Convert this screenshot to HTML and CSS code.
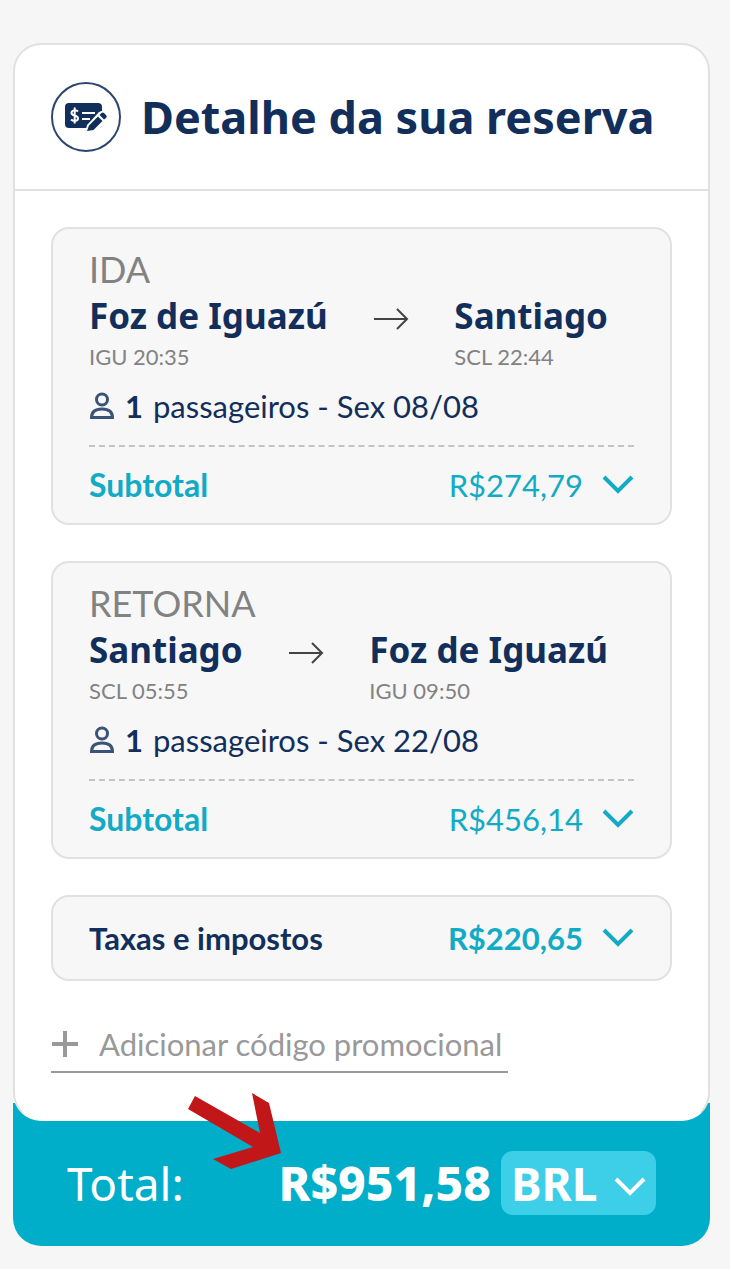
FILE: index.html
```html
<!DOCTYPE html>
<html lang="pt-BR">
<head>
  <meta charset="UTF-8">
  <meta name="viewport" content="width=device-width, initial-scale=1">
  <title>Detalhe da sua reserva</title>
  <link rel="stylesheet" href="styles.css">
</head>
<body>
  <main class="booking">
    <div class="card">
      <header class="card-header">
        <span class="header-icon">
          <svg width="44" height="34" viewBox="0 0 44 34" aria-hidden="true">
            <rect x="1" y="3" width="37" height="25" rx="4" fill="#122f5c"/>
            <path d="M14 11.5C12 9.5 7.500 10 7.500 13C7.500 16.500 14 14.500 14 18.500C14 21.500 9 21.500 7 19.500M10.700 7.500V23.500" fill="none" stroke="#fff" stroke-width="2"/>
            <path d="M18 13H31M18 19H26" stroke="#fff" stroke-width="2"/>
            <path d="M21 33L23 25L35 12L40 10L46 16L32 33Z" fill="#fff"/>
            <path d="M23 31L25 25.500L34 16.500L38.500 21L29.500 30Z" fill="#122f5c"/>
            <path d="M35.500 15L37.500 13Q39 12 40.500 13.500L42 15Q43.500 16.500 42 18L40 19.500Z" fill="#122f5c"/>
          </svg>
        </span>
        <h1>Detalhe da sua reserva</h1>
      </header>

      <div class="card-body">
        <section class="box flight">
          <p class="direction">IDA</p>
          <div class="route">
            <div class="stop">
              <h2>Foz de Iguazú</h2>
              <p>IGU 20:35</p>
            </div>
            <svg class="route-arrow" width="36" height="24" viewBox="0 0 36 24" aria-hidden="true"><path d="M1 12H34M24 2L34 12L24 22"/></svg>
            <div class="stop">
              <h2>Santiago</h2>
              <p>SCL 22:44</p>
            </div>
          </div>
          <p class="passengers">
            <svg width="26" height="28" viewBox="0 0 26 28" aria-hidden="true"><circle cx="13" cy="7.500" r="5.500"/><path d="M2.500 25.500C2.500 20 6 17 13 17S23.500 20 23.500 25.500Z"/></svg>
            <b>1</b>
            <span>passageiros - Sex 08/08</span>
          </p>
          <button type="button" class="price-row subtotal">
            <span class="label">Subtotal</span>
            <span class="amount">R$274,79</span>
            <svg class="chevron" width="32" height="20" viewBox="0 0 32 20" aria-hidden="true"><path d="M2 2L16 16L30 2"/></svg>
          </button>
        </section>

        <section class="box flight">
          <p class="direction">RETORNA</p>
          <div class="route">
            <div class="stop">
              <h2>Santiago</h2>
              <p>SCL 05:55</p>
            </div>
            <svg class="route-arrow" width="36" height="24" viewBox="0 0 36 24" aria-hidden="true"><path d="M1 12H34M24 2L34 12L24 22"/></svg>
            <div class="stop">
              <h2>Foz de Iguazú</h2>
              <p>IGU 09:50</p>
            </div>
          </div>
          <p class="passengers">
            <svg width="26" height="28" viewBox="0 0 26 28" aria-hidden="true"><circle cx="13" cy="7.500" r="5.500"/><path d="M2.500 25.500C2.500 20 6 17 13 17S23.500 20 23.500 25.500Z"/></svg>
            <b>1</b>
            <span>passageiros - Sex 22/08</span>
          </p>
          <button type="button" class="price-row subtotal">
            <span class="label">Subtotal</span>
            <span class="amount">R$456,14</span>
            <svg class="chevron" width="32" height="20" viewBox="0 0 32 20" aria-hidden="true"><path d="M2 2L16 16L30 2"/></svg>
          </button>
        </section>

        <section class="box">
          <button type="button" class="price-row taxes">
            <span class="label">Taxas e impostos</span>
            <span class="amount">R$220,65</span>
            <svg class="chevron" width="32" height="20" viewBox="0 0 32 20" aria-hidden="true"><path d="M2 2L16 16L30 2"/></svg>
          </button>
        </section>

        <button type="button" class="promo">
          <svg width="28" height="28" viewBox="0 0 28 28" aria-hidden="true"><path d="M14 1V27M1 14H27"/></svg>
          <span>Adicionar código promocional</span>
        </button>
      </div>
    </div>

    <footer class="total">
      <span class="total-label">Total:</span>
      <strong class="total-amount">R$951,58</strong>
      <div class="currency">
        <select aria-label="Moeda">
          <option>BRL</option>
          <option>USD</option>
        </select>
        <svg width="32" height="20" viewBox="0 0 32 20" aria-hidden="true"><path d="M2 2L16 16L30 2"/></svg>
      </div>
      <svg class="pointer" width="94" height="78" viewBox="0 0 94 78" aria-hidden="true"><path d="M8 4L73 41L65 1L82 11L94 61L44 77L26 67L66 55L1 17Z" fill="#c11718"/></svg>
    </footer>
  </main>
</body>
</html>
```
FILE: styles.css
```css
* {
  box-sizing: border-box;
}
body {
  margin: 0;
  padding: 43px 20px 22px 13px;
  background: #f6f6f6;
  color: #122f5c;
  font-family: Lato, sans-serif;
  font-size: 31px;
  line-height: 40px;
}
h1, h2, p {
  margin: 0;
}
button, select {
  border: 0;
  padding: 0;
  background: none;
  color: inherit;
  font: inherit;
  text-align: left;
  cursor: pointer;
}
svg {
  display: block;
  flex: none;
}

.card {
  position: relative;
  z-index: 1;
  background: #fff;
  border: 2px solid #e1e1e1;
  border-bottom-color: #fff;
  border-radius: 28px;
}
.card-header {
  display: flex;
  align-items: center;
  gap: 20px;
  height: 146px;
  padding: 0 36px;
  border-bottom: 2px solid #e1e1e1;
}
.header-icon {
  display: flex;
  flex: none;
  align-items: center;
  justify-content: center;
  width: 70px;
  height: 70px;
  border: 2px solid #2c466e;
  border-radius: 50%;
}
h1 {
  font-family: "Noto Sans", sans-serif;
  font-size: 45px;
  line-height: 60px;
  font-weight: 700;
  white-space: nowrap;
}

.card-body {
  display: flex;
  flex-direction: column;
  gap: 36px;
  padding: 36px 36px 46px;
}
.box {
  background: #f7f7f7;
  border: 2px solid #e1e1e1;
  border-radius: 18px;
  padding: 0 36px;
}
.flight {
  padding-top: 18px;
}
.direction {
  color: #828282;
  font-size: 36px;
  line-height: 44px;
}
.route {
  display: flex;
  justify-content: space-between;
  padding-right: 26px;
}
.stop h2 {
  font-family: "Noto Sans", sans-serif;
  font-size: 35px;
  line-height: 50px;
  font-weight: 700;
  white-space: nowrap;
}
.stop p {
  color: #828282;
  font-size: 22px;
  line-height: 32px;
}
.route-arrow {
  margin-top: 16px;
  fill: none;
  stroke: #444;
  stroke-width: 2;
}
.passengers {
  display: flex;
  align-items: center;
  gap: 10px;
  margin: 13px 0 19px;
}
.passengers svg {
  fill: none;
  stroke: #3b5377;
  stroke-width: 3;
}
.price-row {
  display: flex;
  align-items: center;
  width: 100%;
}
.price-row .label {
  flex: 1;
  font-weight: 700;
}
.subtotal {
  height: 78px;
  border-top: 2px dashed #c4c4c4;
  color: #12abc5;
}
.subtotal .label {
  font-size: 32px;
}
.taxes {
  height: 82px;
}
.amount {
  color: #12abc5;
}
.taxes .amount {
  font-weight: 700;
}
.chevron {
  margin-left: 19px;
}
.chevron path {
  fill: none;
  stroke: #12abc5;
  stroke-width: 4;
}
.promo {
  display: flex;
  align-items: center;
  align-self: flex-start;
  gap: 20px;
  height: 56px;
  padding-right: 6px;
  border-bottom: 2px solid #999;
  color: #999;
}
.promo path {
  stroke: #999;
  stroke-width: 4;
}

.total {
  position: relative;
  display: flex;
  align-items: center;
  margin-top: -18px;
  padding: 48px 54px 31px;
  background: #00aec9;
  border-radius: 0 0 28px 28px;
  color: #fff;
  font-family: "Noto Sans", sans-serif;
  font-size: 46px;
  line-height: 64px;
}
.total-label {
  flex: 1;
}
.total-amount {
  font-size: 48px;
  font-weight: 800;
}
.currency {
  position: relative;
  margin-left: 10px;
}
.currency select {
  display: block;
  width: 155px;
  height: 64px;
  padding-left: 10px;
  border-radius: 12px;
  background: #3ecfe8;
  appearance: none;
  font-weight: 700;
}
.currency svg {
  position: absolute;
  right: 10px;
  top: 26px;
  pointer-events: none;
}
.currency path {
  fill: none;
  stroke: #fff;
  stroke-width: 4;
}
.pointer {
  position: absolute;
  left: 174px;
  top: -11px;
  z-index: 2;
}
```
